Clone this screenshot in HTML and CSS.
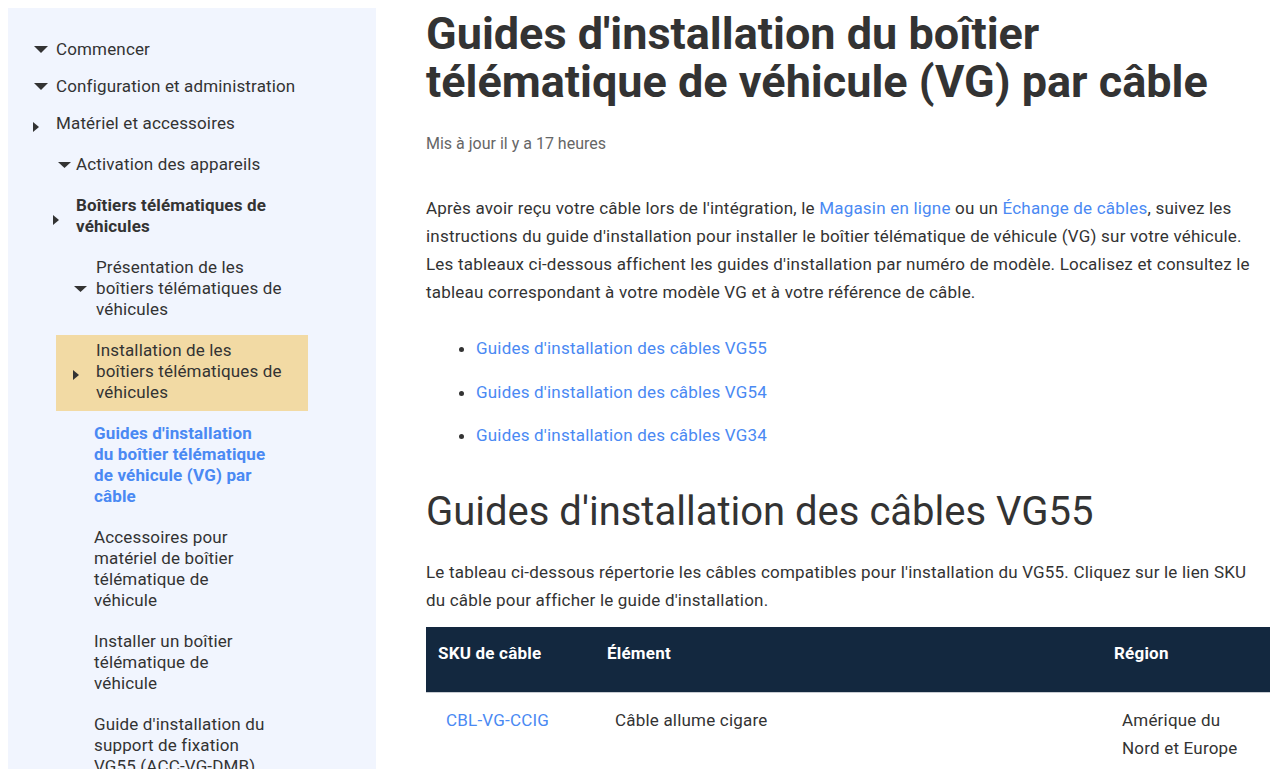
FILE: index.html
```html
<!DOCTYPE html>
<html lang="fr">
<head>
<meta charset="utf-8">
<title>Guides d'installation du boîtier télématique de véhicule (VG) par câble</title>
<link rel="stylesheet" href="styles.css">
</head>
<body>
<div class="page">
  <aside class="sidebar">
    <ul class="nav">
      <li class="l1"><div class="row"><span class="caret down c1"><svg width="14" height="7" viewBox="0 0 14 7"><polygon points="0,0 14,0 7,7" fill="#333"/></svg></span><span class="label">Commencer</span></div></li>
      <li class="l1"><div class="row"><span class="caret down c1"><svg width="14" height="7" viewBox="0 0 14 7"><polygon points="0,0 14,0 7,7" fill="#333"/></svg></span><span class="label">Configuration et administration</span></div></li>
      <li class="l1"><div class="row"><span class="caret right"><svg width="6" height="10" viewBox="0 0 6 10"><polygon points="0,0 6,5 0,10" fill="#333"/></svg></span><span class="label">Matériel et accessoires</span></div>
        <ul class="sub">
          <li><div class="row"><span class="caret down c2"><svg width="13" height="6" viewBox="0 0 13 6"><polygon points="0,0 13,0 6.5,6" fill="#333"/></svg></span><span class="label">Activation des appareils</span></div>
            <ul class="sub0">
              <li><div class="row"><span class="caret right"><svg width="6" height="10" viewBox="0 0 6 10"><polygon points="0,0 6,5 0,10" fill="#333"/></svg></span><span class="label bold">Boîtiers télématiques de véhicules</span></div>
                <ul class="sub4">
                  <li><div class="row r4"><span class="caret down c1"><svg width="13" height="6" viewBox="0 0 13 6"><polygon points="0,0 13,0 6.5,6" fill="#333"/></svg></span><span class="label">Présentation de les boîtiers télématiques de véhicules</span></div></li>
                  <li><div class="row r4 active"><span class="caret right"><svg width="6" height="10" viewBox="0 0 6 10"><polygon points="0,0 6,5 0,10" fill="#333"/></svg></span><span class="label">Installation de les boîtiers télématiques de véhicules</span></div></li>
                  <li><div class="row leaf current"><span class="label">Guides d'installation du boîtier télématique de véhicule (VG) par câble</span></div></li>
                  <li><div class="row leaf"><span class="label">Accessoires pour matériel de boîtier télématique de véhicule</span></div></li>
                  <li><div class="row leaf"><span class="label">Installer un boîtier télématique de véhicule</span></div></li>
                  <li><div class="row leaf"><span class="label">Guide d'installation du support de fixation VG55 (ACC-VG-DMB)</span></div></li>
                </ul>
              </li>
            </ul>
          </li>
        </ul>
      </li>
    </ul>
  </aside>

  <main class="content">
    <h1 class="title">Guides d'installation du boîtier télématique de véhicule (VG) par câble</h1>
    <p class="updated">Mis à jour il y a 17 heures</p>
    <p class="text intro">Après avoir reçu votre câble lors de l'intégration, le <a href="#">Magasin en ligne</a> ou un <a href="#">Échange de câbles</a>, suivez les instructions du guide d'installation pour installer le boîtier télématique de véhicule (VG) sur votre véhicule. Les tableaux ci-dessous affichent les guides d'installation par numéro de modèle. Localisez et consultez le tableau correspondant à votre modèle VG et à votre référence de câble.</p>
    <ul class="links">
      <li><a href="#">Guides d'installation des câbles VG55</a></li>
      <li><a href="#">Guides d'installation des câbles VG54</a></li>
      <li><a href="#">Guides d'installation des câbles VG34</a></li>
    </ul>
    <h2 class="section">Guides d'installation des câbles VG55</h2>
    <p class="text desc">Le tableau ci-dessous répertorie les câbles compatibles pour l'installation du VG55. Cliquez sur le lien SKU du câble pour afficher le guide d'installation.</p>
    <table class="cables">
      <thead>
        <tr><th class="col-sku">SKU de câble</th><th class="col-item">Élément</th><th class="col-region">Région</th></tr>
      </thead>
      <tbody>
        <tr><td><a href="#">CBL-VG-CCIG</a></td><td>Câble allume cigare</td><td>Amérique du Nord et Europe</td></tr>
      </tbody>
    </table>
  </main>
</div>
</body>
</html>
```
FILE: styles.css
```css
html, body {
  overflow: hidden;
}
body {
  margin: 8px 0 0 8px;
  font-family: Roboto, "Liberation Sans", Arial, sans-serif;
  color: #333;
  background: #fff;
}
a {
  color: #4a89f3;
  text-decoration: none;
}
.page {
  display: flex;
  align-items: flex-start;
}

/* Sidebar */
.sidebar {
  flex: none;
  width: 368px;
  min-height: 900px;
  background: #f1f5fe;
}
.sidebar ul {
  list-style: none;
  margin: 0;
  padding: 0;
}
.nav {
  padding: 23px 0 0 25px !important;
}
.row {
  display: flex;
  align-items: center;
  font-size: 17px;
  letter-spacing: 0.15px;
  line-height: 21px;
  padding: 10px 0;
}
.l1 > .row {
  padding: 8px 0;
}
.caret {
  flex: none;
  width: 23px;
  display: flex;
  align-items: center;
}
.caret svg {
  display: block;
}
.caret.right {
  margin-top: 7px;
}
.caret.c1 {
  padding-left: 1px;
  width: 22px;
}
.caret.c2 {
  padding-left: 5px;
  width: 18px;
}
.sub {
  padding: 2px 0 0 20px !important;
}
.sub0 {
  width: 255px;
}
.bold {
  font-weight: 700;
}
.sub4 {
  margin-left: 3px !important;
  width: 252px;
}
.row.r4 {
  padding-left: 17px;
  padding-right: 20px;
}
.row.active {
  background: #f2daa4;
  margin: 5px 0 2px;
  padding-top: 5px;
  padding-bottom: 8px;
}
.row.leaf {
  padding-left: 38px;
  padding-right: 38px;
}
.row.current {
  color: #4a89f3;
  font-weight: 700;
}

/* Content */
.content {
  flex: none;
  width: 844px;
  margin-left: 50px;
}
.title {
  margin: 2px 0 0;
  font-size: 45px;
  line-height: 48px;
  font-weight: 700;
  color: #333;
}
.updated {
  margin: 28px 0 0;
  font-size: 16px;
  line-height: 20px;
  color: #666;
}
.text {
  font-size: 17px;
  letter-spacing: 0.2px;
  line-height: 28px;
  margin: 0;
}
.intro {
  margin-top: 40px;
}
.links {
  margin: 28px 0 0;
  padding-left: 50px;
  font-size: 17px;
  letter-spacing: 0.2px;
  line-height: 28px;
}
.links li {
  margin-bottom: 15.5px;
}
.links li:last-child {
  margin-bottom: 0;
}
.section {
  margin: 39px 0 0;
  font-size: 40px;
  line-height: 48px;
  font-weight: 400;
  color: #333;
}
.desc {
  margin-top: 22px;
}
.cables {
  margin-top: 13px;
  width: 844px;
  border-collapse: collapse;
  font-size: 17px;
  letter-spacing: 0.2px;
}
.cables th {
  background: #13283f;
  color: #fff;
  font-weight: 700;
  text-align: left;
  line-height: 20px;
  padding: 16px 12px 29px;
  border-bottom: 1px solid #c8ccd2;
}
.col-sku { width: 145px; }
.col-item { width: 483px; }
.cables td {
  vertical-align: top;
  line-height: 28px;
  padding: 13px 20px 10px;
}
```
